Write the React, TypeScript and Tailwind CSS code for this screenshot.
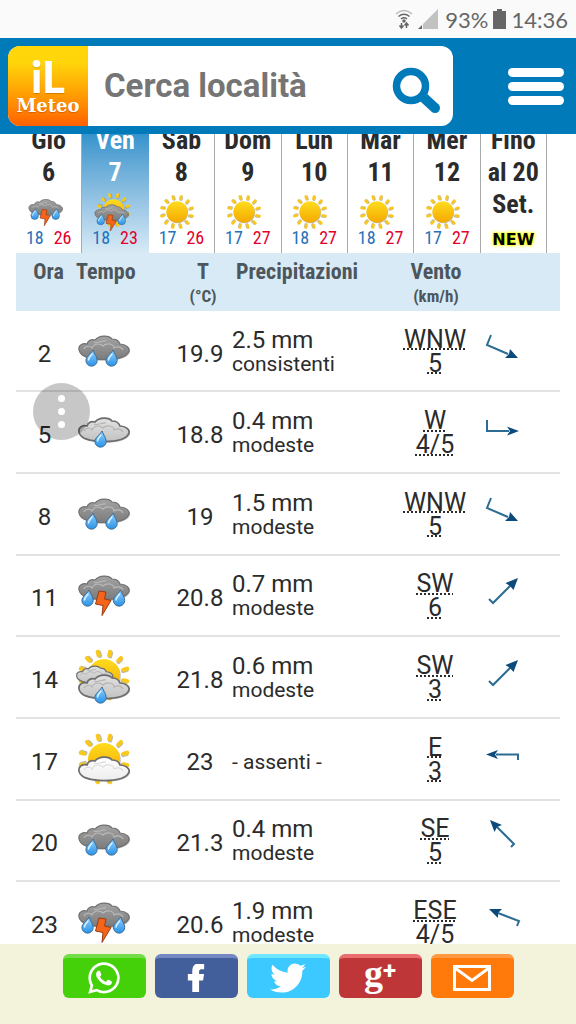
import type { ReactNode } from "react";
import clsx from "clsx";
import { FaFacebookF, FaTwitter, FaWhatsapp } from "react-icons/fa";

type Weather = "rain" | "light-rain" | "storm" | "sun" | "sun-storm" | "sun-shower" | "sun-cloud";
type Wind = "WNW" | "W" | "SW" | "E" | "SE" | "ESE";

type Day = { name: string; num: number; icon: Weather; min: number; max: number; active?: boolean };

const DAYS: Day[] = [
  { name: "Gio", num: 6, icon: "storm", min: 18, max: 26 },
  { name: "Ven", num: 7, icon: "sun-storm", min: 18, max: 23, active: true },
  { name: "Sab", num: 8, icon: "sun", min: 17, max: 26 },
  { name: "Dom", num: 9, icon: "sun", min: 17, max: 27 },
  { name: "Lun", num: 10, icon: "sun", min: 18, max: 27 },
  { name: "Mar", num: 11, icon: "sun", min: 18, max: 27 },
  { name: "Mer", num: 12, icon: "sun", min: 17, max: 27 },
];

type Hour = {
  hour: number;
  icon: Weather;
  temp: string;
  rain?: string;
  note: string;
  wind: Wind;
  speed: string;
};

const HOURS: Hour[] = [
  { hour: 2, icon: "rain", temp: "19.9", rain: "2.5 mm", note: "consistenti", wind: "WNW", speed: "5" },
  { hour: 5, icon: "light-rain", temp: "18.8", rain: "0.4 mm", note: "modeste", wind: "W", speed: "4/5" },
  { hour: 8, icon: "rain", temp: "19", rain: "1.5 mm", note: "modeste", wind: "WNW", speed: "5" },
  { hour: 11, icon: "storm", temp: "20.8", rain: "0.7 mm", note: "modeste", wind: "SW", speed: "6" },
  { hour: 14, icon: "sun-shower", temp: "21.8", rain: "0.6 mm", note: "modeste", wind: "SW", speed: "3" },
  { hour: 17, icon: "sun-cloud", temp: "23", note: "- assenti -", wind: "E", speed: "3" },
  { hour: 20, icon: "rain", temp: "21.3", rain: "0.4 mm", note: "modeste", wind: "SE", speed: "5" },
  { hour: 23, icon: "storm", temp: "20.6", rain: "1.9 mm", note: "modeste", wind: "ESE", speed: "4/5" },
];

const RAYS = [15, 45, 75, 105, 135, 165, 195, 225, 255, 285, 315, 345];

function Sun({ x = 30, y = 30 }: { x?: number; y?: number }) {
  return (
    <g transform={`translate(${x} ${y})`}>
      {RAYS.map((a) => (
        <g key={a} transform={`rotate(${a})`}>
          <rect x="-1.2" y="-25" width="4.4" height="7.5" rx="1.8" fill="#8a8468" opacity="0.55" />
          <rect x="-2.1" y="-26" width="4.2" height="7.5" rx="1.8" fill="#f8c81c" />
        </g>
      ))}
      <circle cx="0.8" cy="1" r="16" fill="#8a8468" opacity="0.5" />
      <circle r="16" fill="url(#sun)" />
    </g>
  );
}

const CLOUD =
  "M1 14C0 9 5 7 9 8C10 4 14 3 17 4C21 -1 31 -1 34 3C38 3 41 5 42 8C48 8 52 12 51 15C49 21 38 23.500 26 23.500C14 23.500 2 21 1 14Z";

function Cloud({ x, y, scale = 1, tone }: { x: number; y: number; scale?: number; tone: "dark" | "light" | "white" }) {
  return (
    <g transform={`translate(${x} ${y}) scale(${scale})`}>
      <path d={CLOUD} transform="translate(1 1.300)" fill="#555" opacity="0.4" />
      <path
        d={CLOUD}
        fill={`url(#cloud-${tone})`}
        stroke={tone === "dark" ? "#707070" : "#6d6d6d"}
        strokeWidth={tone === "dark" ? 1.2 : 1.7}
      />
      <path
        d="M6 13C8 9 13 10 14 12C17 6 23 8 25 10C29 6 36 8 36 12C40 10 44 11 45 14M16 6C20 8 24 4 28 5"
        fill="none"
        stroke={tone === "dark" ? "#b9b9b9" : tone === "light" ? "#b3b3b3" : "#dcdcdc"}
        strokeWidth="1.200"
      />
    </g>
  );
}

function Drop({ x, y }: { x: number; y: number }) {
  return (
    <g transform={`translate(${x} ${y})`}>
      <path d="M1.500 0C3 4 5.700 7 5.700 10.500A5.600 5.600 0 0 1 -5.600 10.500C-5.600 6.500 -1 4.500 1.500 0Z" fill="url(#drop)" stroke="#3d6d96" strokeWidth="1" />
      <path d="M0.500 4C-1 6 -3 7.500 -3 10" fill="none" stroke="#d9f0ff" strokeWidth="1.500" strokeLinecap="round" />
    </g>
  );
}

function Storm({ y = 0 }: { y?: number }) {
  return (
    <g transform={`translate(0 ${y})`}>
      <Cloud x={5} y={11} tone="dark" />
      <Drop x={14.5} y={25} />
      <Drop x={46} y={25} />
      <path d="M26 26L33 27L31.500 34L38 35.500L29 50.500L30 40.500L22.500 39Z" fill="#f4651a" stroke="#9c3c10" strokeWidth="1" strokeLinejoin="round" />
    </g>
  );
}

const WEATHER: Record<Weather, { label: string; art: ReactNode }> = {
  rain: {
    label: "Pioggia",
    art: (
      <>
        <Cloud x={5} y={15} tone="dark" />
        <Drop x={18.5} y={29} />
        <Drop x={38.5} y={29} />
      </>
    ),
  },
  "light-rain": {
    label: "Pioggia debole",
    art: (
      <>
        <Cloud x={5} y={16} tone="light" />
        <Drop x={27.5} y={29} />
      </>
    ),
  },
  storm: { label: "Temporale", art: <Storm /> },
  sun: { label: "Sereno", art: <Sun /> },
  "sun-storm": {
    label: "Temporale e schiarite",
    art: (
      <>
        <Sun x={34} y={27} />
        <Storm y={8} />
      </>
    ),
  },
  "sun-shower": {
    label: "Pioggia e schiarite",
    art: (
      <>
        <Sun x={31} y={28} />
        <Cloud x={3} y={19} scale={0.72} tone="light" />
        <Cloud x={5} y={28} tone="light" />
        <Drop x={27.5} y={40} />
      </>
    ),
  },
  "sun-cloud": {
    label: "Nubi sparse",
    art: (
      <>
        <Sun x={31} y={30} />
        <Cloud x={5} y={28} tone="white" />
      </>
    ),
  },
};

function WeatherIcon({ type, className }: { type: Weather; className: string }) {
  return (
    <svg viewBox="0 0 60 60" className={className} role="img" aria-label={WEATHER[type].label}>
      {WEATHER[type].art}
    </svg>
  );
}

// gradients shared by every weather icon
function IconDefs() {
  const stops = (id: string, from: string, to: string) => (
    <linearGradient id={id} x1="0" y1="0" x2="0" y2="1">
      <stop offset="0" stopColor={from} />
      <stop offset="1" stopColor={to} />
    </linearGradient>
  );
  return (
    <svg className="absolute size-0" aria-hidden="true">
      <defs>
        {stops("sun", "#ffdc1e", "#f5a800")}
        {stops("cloud-dark", "#a3a3a3", "#7c7c7c")}
        {stops("cloud-light", "#e2e2e2", "#c2c2c2")}
        {stops("cloud-white", "#ffffff", "#ededed")}
        {stops("drop", "#8fd0ff", "#2b93e6")}
      </defs>
    </svg>
  );
}

const ARROWS: Record<Wind, { tail: string; head: string }> = {
  WNW: { tail: "M12 8L8 18L29 27", head: "M39 31L26 31L30 27L31 22Z" },
  W: { tail: "M8 12V23H30", head: "M40 23L28 27.500L31 23L28 18.500Z" },
  SW: { tail: "M10 28L14 32L32 14", head: "M39 7L34.500 19L31 15L26.500 12Z" },
  E: { tail: "M39 25V19.500H17", head: "M7 19.500L19 15L16 19.500L19 24Z" },
  SE: { tail: "M32 31L35 28L17 10", head: "M11 4L23 9L18 11L15.500 16Z" },
  ESE: { tail: "M38 28L40 23L19 15", head: "M10 11L23 11L19 15L19 20Z" },
};

function WindArrow({ dir }: { dir: Wind }) {
  return (
    <svg viewBox="0 0 48 48" className="ml-1 size-12" role="img" aria-label={`Vento da ${dir}`}>
      <path d={ARROWS[dir].tail} fill="none" stroke="#2c6c92" strokeWidth="2" />
      <path d={ARROWS[dir].head} fill="#0d4a7c" />
    </svg>
  );
}

function StatusBar() {
  return (
    <div className="flex h-[38px] items-center justify-end gap-[5px] bg-[#fafafa] px-2 font-['Lato',sans-serif] text-[22px] text-[#666]">
      <svg viewBox="0 0 18 20" className="h-5 w-[18px]" fill="none" stroke="#666" strokeWidth="1.500">
        <path d="M1 5Q9 -2 17 5" stroke="#bbb" />
        <path d="M3.500 7.500Q9 3 14.500 7.500M6 10Q9 7.500 12 10" />
        <circle cx="9" cy="12" r="1" fill="#666" />
        <path d="M6.500 14V18M4.500 16.500L6.500 19L8.500 16.500M11.500 19V15M9.500 16.500L11.500 14L13.500 16.500" />
      </svg>
      <svg viewBox="0 0 20 20" className="size-5">
        <path d="M20 0V20H5V15Z" fill="#c2c2c2" />
        <path d="M4 16V20H0Z" fill="#666" />
      </svg>
      <span className="ml-0.5">93%</span>
      <svg viewBox="0 0 13 20" className="h-5 w-[13px]" fill="#666">
        <path d="M4 0H9V2H13V20H0V2H4Z" />
      </svg>
      <span>14:36</span>
    </div>
  );
}

function Header() {
  return (
    <header className="flex h-24 items-center justify-between bg-[#007ab9] pr-3 pl-2">
      <form className="flex h-20 w-[445px] items-center overflow-hidden rounded-xl bg-white">
        <a
          href="#home"
          className="flex size-20 shrink-0 flex-col items-center justify-center bg-linear-to-b from-[#fed60a] from-20% to-[#ff5f00] text-white text-shadow-xs"
        >
          <span className="font-['Lato',sans-serif] text-[44px] leading-10 font-black">iL</span>
          <span className="font-['DejaVu_Serif',serif] text-lg leading-5 font-bold">Meteo</span>
        </a>
        <input
          type="text"
          aria-label="Cerca località"
          placeholder="Cerca località"
          className="min-w-0 flex-1 px-4 font-['Roboto',sans-serif] text-[33px] font-bold outline-none placeholder:text-[#757575]"
        />
        <button type="submit" aria-label="Cerca" className="mr-2 shrink-0">
          <svg viewBox="0 0 54 54" className="size-[54px]" fill="none" stroke="#007ab9" strokeLinecap="round">
            <circle cx="20" cy="27" r="14.500" strokeWidth="7.500" />
            <path d="M32 38L44 49" strokeWidth="10" />
          </svg>
        </button>
      </form>
      <button type="button" aria-label="Menu" className="flex flex-col gap-[5px]">
        <span className="h-[9px] w-14 rounded-full bg-white" />
        <span className="h-[9px] w-14 rounded-full bg-white" />
        <span className="h-[9px] w-14 rounded-full bg-white" />
      </button>
    </header>
  );
}

function DayStrip() {
  return (
    <nav className="mr-[13px] grid grid-cols-8 font-['Roboto_Condensed','Roboto',sans-serif]">
      {DAYS.map((d) => (
        <a
          key={d.num}
          href={`#giorno-${d.num}`}
          className={clsx(
            "flex flex-col items-center border-r pb-[9px] text-[26px] leading-8 font-bold",
            d.active
              ? "border-transparent bg-linear-to-b from-[#1c8cc8] to-[#d8eaf5] text-white"
              : "border-[#aaa] text-[#2b2b2b]",
          )}
        >
          <span>{d.name}</span>
          <span>{d.num}</span>
          <WeatherIcon type={d.icon} className="mt-1 mr-2 size-10" />
          <span className="flex gap-2.5 text-lg leading-3 font-normal">
            <span className="text-[#2471b9]">{d.min}</span>
            <span className="text-[#e3002b]">{d.max}</span>
          </span>
        </a>
      ))}
      <a
        href="#lungo-termine"
        className="border-r border-[#aaa] text-center text-[26px] leading-8 font-bold text-[#2b2b2b]"
      >
        Fino al&nbsp;20 Set.
        <span className="block pt-2 font-['DejaVu_Sans',sans-serif] text-base text-black [text-shadow:0_0_1px_#ff0,0_0_2px_#ff0,0_0_3px_#ff0,0_0_4px_#ff0]">
          NEW
        </span>
      </a>
    </nav>
  );
}

function HourRow({ row }: { row: Hour }) {
  return (
    <tr className="border-b-2 border-[#e2e2e2]">
      <td className="pt-1.5 text-center">{row.hour}</td>
      <td>
        <WeatherIcon type={row.icon} className="size-[60px]" />
      </td>
      <td className="pt-1.5 text-center">{row.temp}</td>
      <td className={row.rain ? "pt-0.5 pl-0.5" : "pt-1.5 pl-0.5"}>
        {row.rain && <div>{row.rain}</div>}
        <div className="text-[21px]">{row.note}</div>
      </td>
      <td className="pt-0.5 text-center text-[25px] leading-6 underline decoration-dotted decoration-2 underline-offset-1">
        <div>{row.wind}</div>
        <div>{row.speed}</div>
      </td>
      <td>
        <WindArrow dir={row.wind} />
      </td>
    </tr>
  );
}

function Forecast() {
  return (
    <table className="h-[711px] w-full table-fixed border-collapse font-['Roboto',sans-serif] text-2xl leading-6 text-[#2b2b2b]">
      <colgroup>
        <col className="w-[57px]" />
        <col className="w-[97px]" />
        <col className="w-[60px]" />
        <col />
        <col className="w-[80px]" />
        <col className="w-[85px]" />
      </colgroup>
      <thead className="h-[58px] bg-[#d8eaf5] font-['Roboto_Condensed','Roboto',sans-serif] text-[22px] text-[#4c565c]">
        <tr>
          <th className="pt-[7px] pl-2 align-top">Ora</th>
          <th className="pt-[7px] pl-[3px] text-left align-top">Tempo</th>
          <th className="pt-[7px] pl-1.5 align-top">
            T<small className="block text-[17px]">(°C)</small>
          </th>
          <th className="pt-[7px] pl-1.5 text-left align-top">Precipitazioni</th>
          <th className="pt-[7px] pl-0.5 align-top">
            Vento<small className="block text-[17px]">(km/h)</small>
          </th>
          <th aria-label="Direzione" />
        </tr>
      </thead>
      <tbody>
        {HOURS.map((row) => (
          <HourRow key={row.hour} row={row} />
        ))}
      </tbody>
    </table>
  );
}

function ShareButton({ label, className, children }: { label: string; className: string; children: ReactNode }) {
  return (
    <button
      type="button"
      aria-label={label}
      className={clsx("flex h-11 w-[83px] items-center justify-center rounded-md border-t-4 text-white", className)}
    >
      {children}
    </button>
  );
}

function ShareBar() {
  return (
    <footer className="flex h-20 items-start justify-center gap-[9px] bg-[#f3f2da] pt-2.5">
      <ShareButton label="WhatsApp" className="border-[#73dc46] bg-[#45d10a]">
        <FaWhatsapp className="size-9" />
      </ShareButton>
      <ShareButton label="Facebook" className="border-[#7489c2] bg-[#435f9b]">
        <FaFacebookF className="size-7 stroke-white stroke-[24px]" />
      </ShareButton>
      <ShareButton label="Twitter" className="border-[#6fe8ff] bg-[#3cc9ff]">
        <FaTwitter className="size-9" />
      </ShareButton>
      <ShareButton label="Google+" className="border-[#ea6e70] bg-[#bf3638]">
        <span className="flex items-start pb-2.5 font-['Liberation_Serif',serif] font-bold">
          <span className="text-[38px] leading-6">g</span>
          <span className="font-['Roboto',sans-serif] text-2xl leading-5">+</span>
        </span>
      </ShareButton>
      <ShareButton label="Email" className="border-[#ff9a42] bg-[#ff7a0a]">
        <svg viewBox="0 0 38 26" className="h-[26px] w-[38px]" fill="none" stroke="#fff" strokeWidth="3">
          <rect x="1.500" y="1.500" width="35" height="23" />
          <path d="M2 3L19 15.500L36 3" />
        </svg>
      </ShareButton>
    </footer>
  );
}

export default function App() {
  return (
    <div className="relative flex h-screen flex-col overflow-hidden bg-white">
      <IconDefs />
      <div className="relative z-10">
        <StatusBar />
        <Header />
      </div>
      <main className="min-h-0 flex-1 overflow-hidden px-4">
        <div className="-mt-2.5">
          <DayStrip />
          <Forecast />
        </div>
      </main>
      <ShareBar />
      {/* floating shortcut over the list */}
      <button
        type="button"
        aria-label="Altre opzioni"
        className="absolute top-[383px] left-[33px] flex size-[57px] flex-col items-center justify-center gap-1.5 rounded-full bg-black/22"
      >
        <span className="size-[7px] rounded-full bg-white" />
        <span className="size-[7px] rounded-full bg-white" />
        <span className="size-[7px] rounded-full bg-white" />
      </button>
    </div>
  );
}
